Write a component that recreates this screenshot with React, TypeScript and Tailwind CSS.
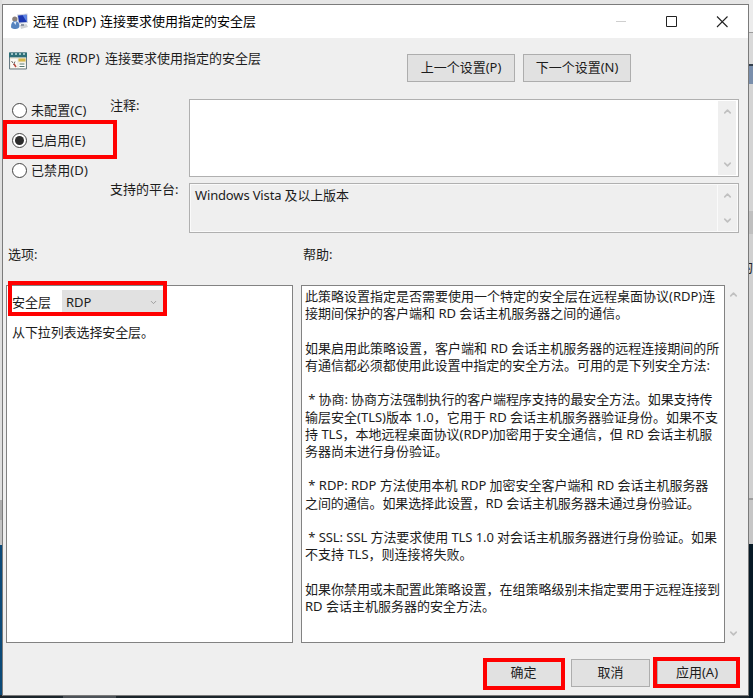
import React, { useState } from 'react';
import { ChevronDown, ChevronUp } from 'lucide-react';

const HELP_LINES = [
  { text: '此策略设置指定是否需要使用一个特定的安全层在远程桌面协议(RDP)连' },
  { text: '接期间保护的客户端和 RD 会话主机服务器之间的通信。' },
  { text: '' },
  { text: '如果启用此策略设置，客户端和 RD 会话主机服务器的远程连接期间的所' },
  { text: '有通信都必须都使用此设置中指定的安全方法。可用的是下列安全方法:', tracking: 'tracking-[-0.05px]' },
  { text: '' },
  { text: ' * 协商: 协商方法强制执行的客户端程序支持的最安全方法。如果支持传', tracking: 'tracking-[-0.1px]' },
  { text: '输层安全(TLS)版本 1.0，它用于 RD 会话主机服务器验证身份。如果不支' },
  { text: '持 TLS，本地远程桌面协议(RDP)加密用于安全通信，但 RD 会话主机服' },
  { text: '务器尚未进行身份验证。' },
  { text: '' },
  { text: ' * RDP: RDP 方法使用本机 RDP 加密安全客户端和 RD 会话主机服务器', tracking: 'tracking-[-0.03px]' },
  { text: '之间的通信。如果选择此设置，RD 会话主机服务器未通过身份验证。', tracking: 'tracking-[-0.1px]' },
  { text: '' },
  { text: ' * SSL: SSL 方法要求使用 TLS 1.0 对会话主机服务器进行身份验证。如果', tracking: 'tracking-[-0.07px]' },
  { text: '不支持 TLS，则连接将失败。' },
  { text: '' },
  { text: '如果你禁用或未配置此策略设置，在组策略级别未指定要用于远程连接到', tracking: 'tracking-[-0.03px]' },
  { text: 'RD 会话主机服务器的安全方法。' },
];

const STATES = [
  { id: 'none', label: '未配置(C)' },
  { id: 'enabled', label: '已启用(E)' },
  { id: 'disabled', label: '已禁用(D)' },
];

const RdpIcon = () => (
  <svg width="18" height="18" viewBox="0 0 18 18">
    <path d="M6 1.5 L16.5 .5 L17 10 L7 11Z" fill="#cdd3e2" />
    <path d="M7 2.5 L15.5 1.7 L15.8 9 L8 9.6Z" fill="#1c37b0" />
    <path d="M11.5 2 L15.5 1.7 L15.8 9Z" fill="#5f86e6" />
    <path d="M9 12 L15.5 11 L17 14 L10 16Z" fill="#cfd1d4" />
    <path d="M10 11h3v2h-3z" fill="#8b95a5" />
    <circle cx="3.8" cy="6" r="2.6" fill="#8b8078" />
    <path d="M0 14c0-4 1.5-6 4-6s4.500 2 4.500 5c0 2-2 3-4 3s-4.500-.5-4.500-2z" fill="#5583bf" />
    <path d="M2.500 9l2 3 1-3.500z" fill="#dce9f8" />
  </svg>
);

const PolicyIcon = () => (
  <svg width="18" height="18" viewBox="0 0 18 18">
    <path d="M.5 1h17v16H.5z" fill="#e9e6d6" stroke="#6a7c85" />
    <path d="M0 .5h18v5H0z" fill="#2e6f78" />
    <path d="M2 2h2M6 2h2M10 2h2M14 2h2" stroke="#c3dfe0" strokeWidth="1.500" />
    <path d="M1 5.500h16" stroke="#a9bcb8" />
    <path d="M1.500 7h7v9h-7z" fill="#fbfaf6" />
    <path d="M2.500 9l1.500 2M6 9.500L4.500 13" stroke="#6c6a66" />
    <path d="M5 12l2 3" stroke="#b6453a" strokeWidth="1.500" />
    <path d="M9.500 6.500h7v3h-7z" fill="#d9b849" />
    <path d="M9.500 10.500h7v5.500h-7z" fill="#fff" />
    <path d="M10.500 12h5M10.500 14.500h5" stroke="#56786b" />
  </svg>
);

const ScrollRail: React.FC<{ className?: string }> = ({ className }) => (
  <div className={`flex flex-col items-center justify-between text-[#c0c0c0] ${className}`}>
    <ChevronUp size={11} strokeWidth={3.5} />
    <ChevronDown size={11} strokeWidth={3.5} />
  </div>
);

const PushButton: React.FC<{ label: string; className: string }> = ({ label, className }) => (
  <button className={`flex items-center justify-center h-7 border bg-[#e1e1e1] whitespace-nowrap ${className}`}>
    {label}
  </button>
);

export default function App() {
  const [state, setState] = useState('enabled');

  return (
    <div
      lang="zh-CN"
      className="relative flex w-[753px] h-[698px] overflow-hidden bg-[#1b252c] text-[13px] leading-[17.22px] text-[#1c1c1c] font-['Noto_Sans','Noto_Sans_CJK_SC',sans-serif]"
    >
      {/* Desktop left of the dialog */}
      <div className="w-[2px] shrink-0 flex flex-col">
        <div className="h-[500px] bg-[#dfdfdf]" />
        <div className="h-[20px] bg-[#adadad]" />
        <div className="h-[25px] bg-[#c4c4c4]" />
        <div className="h-[150px] bg-[#0c4a78]" />
      </div>

      <div className="w-[747px] shrink-0 flex flex-col">
        <div className="h-1 bg-[#e6e6e6]" />
        <div className="h-[692px] flex flex-col border border-[#7b7b7b] bg-[#efefef]">
          {/* Title bar */}
          <div className="h-[33px] shrink-0 flex items-center bg-white text-black">
            <div className="pl-2 w-[30px] shrink-0"><RdpIcon /></div>
            <div className="flex-1 whitespace-nowrap [word-spacing:0.5px]">远程 (RDP) 连接要求使用指定的安全层</div>
            <svg width="132" height="33" viewBox="0 0 132 33" fill="none" className="shrink-0">
              <path d="M0 16.5h10" stroke="#cfcfcf" />
              <path d="M50.5 11.5h10v10h-10z" stroke="#222" />
              <path d="M101 11.5l10.5 10.5M111.5 11.5L101 22" stroke="#222" strokeWidth="1.1" />
            </svg>
          </div>

          {/* Heading and navigation */}
          <div className="h-[61px] shrink-0 flex">
            <div className="pl-[6px] pt-[14px] w-8 shrink-0"><PolicyIcon /></div>
            <div className="w-[372px] pt-[12px] whitespace-nowrap [word-spacing:2px]">远程 (RDP) 连接要求使用指定的安全层</div>
            <div className="pt-4 flex gap-2">
              <PushButton label="上一个设置(P)" className="w-[108px] border-[#adadad]" />
              <PushButton label="下一个设置(N)" className="w-[108px] border-[#adadad]" />
            </div>
          </div>

          {/* State, comment and platform */}
          <div className="h-[147px] shrink-0 flex">
            <div className="w-[107px] shrink-0 pl-[9px] pt-[3px] flex flex-col">
              {STATES.map(({ id, label }) => (
                <button key={id} onClick={() => setState(id)} className="h-[30px] flex items-start gap-1 whitespace-nowrap tracking-[0.1px]">
                  <span className="mt-[1px] w-[15px] h-[15px] rounded-full border border-[#444] bg-white flex items-center justify-center shrink-0">
                    {state === id && <span className="w-[9px] h-[9px] rounded-full bg-[#2b2b2b]" />}
                  </span>
                  {label}
                </button>
              ))}
            </div>
            <div className="w-[79px] shrink-0 whitespace-nowrap -mt-[2px]">
              <div className="h-[84px]">注释:</div>
              <div>支持的平台:</div>
            </div>
            <div className="w-[550px] flex flex-col gap-[6px]">
              <div className="h-[78px] flex border border-[#b0b0b0] bg-white p-px">
                <div className="flex-1" />
                <ScrollRail className="w-[18px] bg-[#efefef] pt-[5px] pb-[5px] mr-px" />
              </div>
              <div className="h-[50px] flex border border-[#b0b0b0] bg-[#efefef]">
                <div className="flex-1 border border-[#fafafa] pl-1 pt-[2px] tracking-[-0.15px]">Windows Vista 及以上版本</div>
                <ScrollRail className="w-[20px] border-y border-r border-[#fafafa] pt-[5px] pb-[5px]" />
              </div>
            </div>
          </div>

          {/* Panel captions */}
          <div className="h-[39px] shrink-0 flex">
            <div className="w-[296px] pl-[5px]">选项:</div>
            <div className="pl-[4px]">帮助:</div>
          </div>

          {/* Options and help panels */}
          <div className="h-[358px] shrink-0 flex pl-[3px]">
            <div className="w-[287px] border border-[#828282] bg-white pl-[5px] pt-[4px]">
              <div className="flex items-center h-[25px]">
                <span className="w-[50px] whitespace-nowrap">安全层</span>
                <button className="w-[103px] h-[25px] bg-[#e1e1e1] flex items-center justify-between pl-1 pr-[7px]">
                  RDP
                  <ChevronDown size={9} strokeWidth={2.5} className="text-[#999]" />
                </button>
              </div>
              <div className="mt-[9px] tracking-[-0.1px]">从下拉列表选择安全层。</div>
            </div>
            <div className="ml-2 w-[424px] border border-[#828282] bg-white pl-[3px] pt-[2px] whitespace-pre">
              {HELP_LINES.map(({ text, tracking }, index) => (
                <div key={index} className={`h-[17.22px] ${tracking ?? ''}`}>{text}</div>
              ))}
            </div>
            <ScrollRail className="w-[17px] py-[4px]" />
          </div>

          {/* Footer */}
          <div className="pt-4 pl-[482px] flex">
            <PushButton label="确定" className="w-[77px] border-[#0078d7]" />
            <PushButton label="取消" className="ml-[9px] w-[79px] border-[#adadad]" />
            <PushButton label="应用(A)" className="ml-[7px] w-[80px] border-[#adadad]" />
          </div>
        </div>
        <div className="h-[2px] pl-[61px]"><div className="w-[53px] h-full bg-[#4c5258]" /></div>
      </div>

      {/* Desktop right of the dialog */}
      <div className="flex-1 flex flex-col">
        <div className="h-8 bg-[#ececec]" />
        <div className="h-8 bg-[#d9d9d9] border-t border-[#9c9c9c]" />
        <div className="h-5 bg-[#7a8fac] border-t-2 border-[#333f4c]" />
        <div className="h-[127px] bg-[#d4d4d4]" />
        <div className="h-[23px] bg-[#bfbfbf]" />
        <div className="h-[264px] bg-[#d0d0d0] pt-[25px] overflow-hidden">
          <div className="w-1 overflow-hidden flex justify-end">的</div>
        </div>
        <div className="h-[46px] bg-[#c6c6c6] border-t-2 border-[#9c9c9c]" />
        <div className="flex-1 bg-[#071a26]" />
      </div>

      {/* Callouts */}
      <div className="absolute left-[3px] top-[120px] w-[114px] h-[39px] border-4 border-[#f00] pointer-events-none" />
      <div className="absolute left-[8px] top-[281px] w-[159px] h-[35px] border-4 border-[#f00] pointer-events-none" />
      <div className="absolute left-[483px] top-[658px] w-[82px] h-[32px] border-4 border-[#f00] pointer-events-none" />
      <div className="absolute left-[653px] top-[657px] w-[87px] h-[31px] border-4 border-[#f00] pointer-events-none" />
    </div>
  );
}
